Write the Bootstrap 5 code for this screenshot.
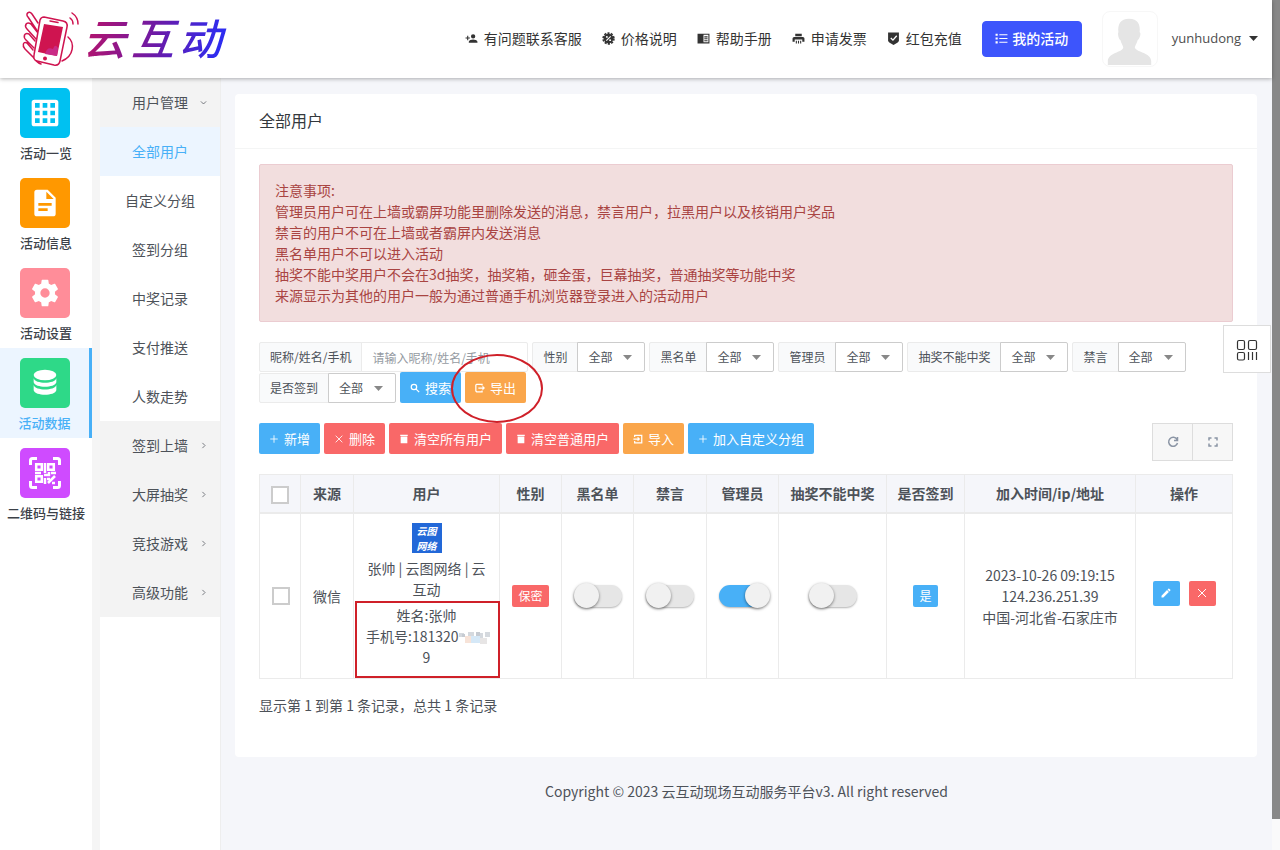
<!DOCTYPE html>
<html lang="zh-CN">
<head>
<meta charset="utf-8">
<meta name="viewport" content="width=device-width, initial-scale=1">
<title>全部用户 - 云互动</title>
<link rel="stylesheet" href="https://cdn.jsdelivr.net/npm/bootstrap@5.3.0/dist/css/bootstrap.min.css">
<style>
:root{--blue:#48b0f7;--red:#f96868;--orange:#faa64b;--ink:#4d5259;--line:#ebebeb}
body{font-family:"Noto Sans CJK SC","Noto Sans",sans-serif;font-size:14px;line-height:21px;color:var(--ink);background:#f5f6fa}
a{text-decoration:none;color:inherit}
.ico{width:1em;height:1em;fill:currentColor;flex:none}
.ln{fill:none;stroke:currentColor;stroke-width:2}
.scroll-track{width:8px;min-width:8px;background:#fafafa}
.scroll-thumb{height:819px;max-height:100%;background:#888}
.topbar{height:78px;background:#fff;box-shadow:0 1px 4px rgba(0,0,0,.3);z-index:5;padding:0 14px 0 21px;color:#333}
.topbar .ico{font-size:13px}
.brand-word{display:flex;gap:5px;font-size:43px;line-height:50px;font-weight:500;font-style:italic;background:linear-gradient(100deg,#b3146e 5%,#6a1aa8 50%,#2e2cf0 90%);-webkit-background-clip:text;background-clip:text;color:transparent;padding:0 10px 0 0;margin-bottom:6px}
.toplinks{gap:20px}
.toplinks>a{display:flex;align-items:center;gap:6px;padding-bottom:2px}
.btn-mine{--bs-btn-bg:#3d55fc;--bs-btn-border-color:#3d55fc;--bs-btn-color:#fff;height:36px;width:100px;font-size:14px;font-weight:500;padding:0 0 2px;border-radius:4px}
.face{width:56px;height:56px;border:1px solid #f7f7f7;border-radius:8px}
.user-btn{border:0;background:none;padding:0 0 2px;color:#4d4d4d;margin-left:14px;font-family:"Open Sans",sans-serif;font-size:13px}
.side-a{width:92px;background:#fff}
.side-a a{display:block;height:90px;padding:10px 0 0 20px;font-size:13px;font-weight:500;color:#3c4148}
.side-a a.on{background:#ecf5ff;border-right:3px solid var(--blue);color:var(--blue)}
.side-a .tile{width:50px;height:50px;border-radius:5px;color:#fff;font-size:32px}
.side-a .cap{width:92px;margin:5px 0 0 -20px;text-align:center;line-height:20px}
.side-a .on .cap{width:89px}
.side-b{width:129px;background:#fff;border-left:8px solid #f5f5f5;border-right:1px solid #eee}
.side-b a{display:flex;align-items:center;justify-content:center;height:49px;position:relative}
.side-b a.grp{background:#f3f3f3}
.side-b a.on{background:#ecf5ff;color:var(--blue)}
.side-b .ico{position:absolute;right:12px;font-size:9px}
.side-b .ln{stroke-width:3}
.panel{background:#fff;border-radius:4px;margin:16px 15px 0 14px;min-height:663px}
.panel-head{height:55px;padding:16px 24px 0;border-bottom:1px solid #f4f5f5;font-size:16px;color:#33383d}
.panel-main{padding:15px 24px}
.notice{background:#f2dede;border:1px solid #ebccd1;border-radius:2px;color:#a94442;padding:15px;margin-bottom:20px}
.filters{gap:1px 4px;font-size:12px}
.filters .input-group{width:auto;flex-wrap:nowrap}
.filters .input-group>*{height:30px;font-size:12px;line-height:18px;border-color:#ebebeb;color:var(--ink)}
.filters .input-group-text{background:#f9fafb;padding:0 10px;border-radius:2px}
.filters .form-control{width:167px;flex:none;padding:0 10px;border-radius:2px}
.filters .form-control::placeholder{color:#959ba2}
.filters .input-group>.form-select{width:68px;flex:none;padding:0 10px;border-color:#ccc;border-radius:2px;background-size:9px 5px;background-position:right 12px center;
--bs-form-select-bg-img:url("data:image/svg+xml,%3Csvg xmlns='http://www.w3.org/2000/svg' viewBox='0 0 9 5'%3E%3Cpath fill='%23888' d='M0 0h9L4.5 5z'/%3E%3C/svg%3E");background-image:var(--bs-form-select-bg-img)}
.filters>button,.filters>.position-relative{margin-top:-1px}
.act{display:inline-flex;align-items:center;gap:5px;height:31px;font-size:13px;line-height:20px;padding:0 10px;border:0;border-radius:2px;color:#fff;white-space:nowrap}
.act .ico{font-size:10px}
.act .ln{stroke-width:3}
.c-blue{background:var(--blue)}.c-red{background:var(--red)}.c-orange{background:var(--orange)}
.hint-ring{position:absolute;left:-14px;top:-18px;width:92px;height:69px;border:2px solid #cf2029;border-radius:50%;pointer-events:none;z-index:6}
.toolbar{margin-top:20px}
.tools button{width:41px;height:38px;border:1px solid #ddd;background:#f7f7f7;color:#8b95a5;padding:0;font-size:12px;display:flex;align-items:center;justify-content:center}
.tools .ln{stroke-width:3}
.tools button+button{margin-left:-1px}
.grid-users{table-layout:fixed;margin:13px 0 16px;color:var(--ink);border-color:var(--line);text-align:center;vertical-align:middle}
.grid-users th{background:#f5f6fa;padding:8px 2px;font-weight:700;color:var(--ink);border-bottom-width:2px}
.grid-users td{padding:10px 12px;color:var(--ink)}
.grid-users td.who{padding-top:9px}
.who-real{padding-top:5px}
.grid-users td.ops{padding-bottom:16px}
.ops-row{gap:9px}
.grid-users input.pick{appearance:none;width:18px;height:18px;border:2px solid #ccc;background:#fff;display:block;margin:0 auto}
.w1{width:41px}.w2{width:53px}.w3{width:146px}.w4{width:62px}.w5{width:72px}.w6{width:73px}.w7{width:72px}.w8{width:108px}.w9{width:78px}.w10{width:171px}.w11{width:97px}
.ava{width:30px;height:30px;background:#2268d8;color:#fff;font-size:10px;line-height:15px;font-weight:700;font-style:italic;margin:0 auto 5px}
.ava span{display:block;height:15px}
.mark-box{position:absolute;left:1px;right:-1px;bottom:0;height:77px;border:2px solid #cf2029;pointer-events:none}
.pill{display:inline-block;font-size:12px;line-height:22px;border-radius:2px;padding:0 6px;color:#fff}
.switcher{appearance:none;position:relative;width:48px;height:22px;border-radius:11px;background:#e6e6e6;box-shadow:0 1px 2px rgba(0,0,0,.3);display:block;margin:0 auto}
.switcher::before{content:"";position:absolute;left:0;top:-2px;width:25px;height:25px;border-radius:50%;background:#f1f1f1;box-shadow:0 1px 3px rgba(0,0,0,.5)}
.switcher:checked{background:var(--blue)}
.switcher:checked::before{left:26px}
.mini{width:27px;height:25px;border:0;border-radius:2px;color:#fff;padding:0;font-size:12px;display:inline-flex;align-items:center;justify-content:center}
.foot{padding:24px 0}
.float-box{position:absolute;right:1px;top:325px;width:48px;height:48px;background:#fff;border:1px solid #ddd;padding:0;color:#333;font-size:24px}
</style>
</head>
<body>
<svg class="d-none">
<symbol id="plus" viewBox="0 0 24 24"><path class="ln" d="M12 3v18M3 12h18"/></symbol>
<symbol id="cross" viewBox="0 0 24 24"><path class="ln" d="M4 4l16 16M20 4L4 20"/></symbol>
<symbol id="trash" viewBox="0 0 24 24"><path d="M3 2h18v3H3zM4 6h16v16H4z"/></symbol>
<symbol id="right" viewBox="0 0 24 24"><path class="ln" d="M9 5l7 7-7 7"/></symbol>
<symbol id="down" viewBox="0 0 24 24"><path class="ln" d="M5 9l7 7 7-7"/></symbol>
</svg>
<div class="d-flex min-vh-100">
<div class="flex-grow-1 d-flex flex-column position-relative">
<header class="topbar d-flex align-items-center position-relative">
  <a href="#" class="d-flex align-items-center" aria-label="云互动">
    <svg width="62" height="60" viewBox="0 0 62 60" fill="none" stroke="#cf1450" stroke-width="1.5" stroke-linecap="round" stroke-linejoin="round">
      <path d="M17 14L11 5C8 1 4 5 7 8L17 23M17 24L10 15C5 12 3 17 6 20L15 30M14 32L8 25C3 23 2 28 5 31L13 39M12 41L6 34C2 32 1 37 4 40L13 49C15 52 17 54 20 55M47 28C54 34 53 47 41 52"/>
      <path fill="#fff" d="M23 8L42 12Q47 13 46 18L39 52Q38 57 33 56L16 52Q12 51 13 46L19 11Q20 8 23 8Z"/>
      <path fill="#cf1450" stroke="none" d="M23 15L42 18L36 47L17 43Z"/><path fill="#c92a86" stroke="none" d="M24 45Q26 37 32 40Q34 34 37 39L36 47Z"/>
      <path d="M29 12l8 1.500M49 9Q52 11 52 15M51 4Q57 8 57 15"/><circle cx="24" cy="49.500" r="2" fill="#cf1450" stroke="none"/>
    </svg>
    <span class="brand-word"><span>云</span><span>互</span><span>动</span></span>
  </a>
  <nav class="toplinks d-flex align-items-center ms-auto">
    <a href="#"><svg class="ico" viewBox="0 0 24 24"><path d="M15 14c-2.700 0-8 1.300-8 4v2h16v-2c0-2.700-5.300-4-8-4M6 10V7H4v3H1v2h3v3h2v-3h3v-2M15 12a4 4 0 0 0 0-8 4 4 0 0 0 0 8"/></svg>有问题联系客服</a>
    <a href="#"><svg class="ico" viewBox="0 0 24 24"><circle cx="12" cy="12" r="9"/><circle cx="12" cy="12" r="10" fill="none" stroke="currentColor" stroke-width="3" stroke-dasharray="4 2.280"/><path d="M8 16l8-8" stroke="#fff" stroke-width="2"/><circle cx="9" cy="9" r="1.800" fill="#fff"/><circle cx="15" cy="15" r="1.800" fill="#fff"/></svg>价格说明</a>
    <a href="#"><svg class="ico" viewBox="0 0 24 24"><path fill-rule="evenodd" d="M1 3h22v18H1zM12 5v14h9V5zM13.500 8h6v2h-6zM13.500 11.500h6v2h-6zM13.500 15h6v2h-6z"/></svg>帮助手册</a>
    <a href="#"><svg class="ico" viewBox="0 0 24 24"><path d="M6 3h12v5H6zM4 9h16q3 0 3 3v6h-4v-4H5v4H1v-6q0-3 3-3M7 16h2v5H7zM11 16h2v5h-2zM15 16h2v5h-2z"/></svg>申请发票</a>
    <a href="#"><svg class="ico" viewBox="0 0 24 24"><path d="M2 1h20v14q0 3-3 5l-7 4-7-4q-3-2-3-5z"/><path d="M7 11l4 4 7-8" fill="none" stroke="#fff" stroke-width="2.500"/></svg>红包充值</a>
    <button class="btn btn-mine d-flex align-items-center justify-content-center gap-1"><svg class="ico" viewBox="0 0 24 24"><path d="M8 4h15v2H8zM8 11h15v2H8zM8 18h15v2H8zM1 3h4v4H1zM1 10h4v4H1zM1 17h4v4H1z"/></svg>我的活动</button>
    <div class="d-flex align-items-center">
      <svg class="face" viewBox="0 0 56 56"><path fill="#e5e5e5" d="M27 7c9 0 12 6 11 14 2 1 0 7-2 8-1 4-3 6-3 8 2 5 17 5 17 14v4H5v-4c0-9 15-9 16-14 0-2-2-4-3-8-2-1-3-7-2-8-1-8 2-14 11-14"/></svg>
      <button class="user-btn d-flex align-items-center gap-2">yunhudong <svg width="9" height="5" viewBox="0 0 9 5"><path fill="#333" d="M0 0h9L4.500 5z"/></svg></button>
    </div>
  </nav>
</header>
<div class="d-flex flex-grow-1">
  <nav class="side-a flex-shrink-0">
    <a href="#"><div class="tile d-flex align-items-center justify-content-center" style="background:#00c1f1"><svg class="ico" viewBox="0 0 24 24"><path fill-rule="evenodd" d="M4 2h16q2 0 2 2v16q0 2-2 2H4q-2 0-2-2V4q0-2 2-2M4.500 4.500v3.500H8V4.500zM10.250 4.500v3.500h3.500V4.500zM16 4.500v3.500h3.500V4.500zM4.500 10.250v3.500H8v-3.500zM10.250 10.250v3.500h3.500v-3.500zM16 10.250v3.500h3.500v-3.500zM4.500 16v3.500H8V16zM10.250 16v3.500h3.500V16zM16 16v3.500h3.500V16z"/></svg></div><div class="cap">活动一览</div></a>
    <a href="#"><div class="tile d-flex align-items-center justify-content-center" style="background:#ff9800"><svg class="ico" viewBox="0 0 24 24"><path fill-rule="evenodd" d="M6 2h8l6 6v12q0 2-2 2H6q-2 0-2-2V4q0-2 2-2M13 3.500V9h5.500zM7 12v2h10v-2zM7 16v2h7v-2z"/></svg></div><div class="cap">活动信息</div></a>
    <a href="#"><div class="tile d-flex align-items-center justify-content-center" style="background:#ff8d99"><svg class="ico" viewBox="0 0 24 24"><path d="M12,15.500A3.500,3.500 0 0,1 8.500,12A3.500,3.500 0 0,1 12,8.500A3.500,3.500 0 0,1 15.500,12A3.500,3.500 0 0,1 12,15.500M19.430,12.970C19.470,12.650 19.500,12.330 19.500,12C19.500,11.670 19.470,11.340 19.430,11L21.540,9.370C21.730,9.220 21.780,8.950 21.660,8.730L19.660,5.270C19.540,5.050 19.270,4.960 19.050,5.050L16.560,6.050C16.040,5.660 15.500,5.320 14.870,5.070L14.500,2.420C14.460,2.180 14.250,2 14,2H10C9.750,2 9.540,2.180 9.500,2.420L9.130,5.070C8.500,5.320 7.960,5.660 7.440,6.050L4.950,5.050C4.730,4.960 4.460,5.050 4.340,5.270L2.340,8.730C2.210,8.950 2.270,9.220 2.460,9.370L4.570,11C4.530,11.340 4.500,11.670 4.500,12C4.500,12.330 4.530,12.650 4.570,12.970L2.460,14.630C2.270,14.780 2.210,15.050 2.340,15.270L4.340,18.730C4.460,18.950 4.730,19.030 4.950,18.950L7.440,17.940C7.960,18.340 8.500,18.680 9.130,18.930L9.500,21.580C9.540,21.820 9.750,22 10,22H14C14.250,22 14.460,21.820 14.500,21.580L14.870,18.930C15.500,18.670 16.040,18.340 16.560,17.940L19.050,18.950C19.270,19.030 19.540,18.950 19.660,18.730L21.660,15.270C21.780,15.050 21.730,14.780 21.540,14.630L19.430,12.970Z"/></svg></div><div class="cap">活动设置</div></a>
    <a href="#" class="on"><div class="tile d-flex align-items-center justify-content-center" style="background:#2ed988"><svg class="ico" viewBox="0 0 24 24"><ellipse cx="12" cy="6" rx="8.500" ry="4"/><path d="M3.500 8.500c1 4.500 16 4.500 17 0v3c-1 4.500-16 4.500-17 0zM3.500 13.500c1 4.500 16 4.500 17 0v4c-1 4.500-16 4.500-17 0z"/></svg></div><div class="cap">活动数据</div></a>
    <a href="#"><div class="tile d-flex align-items-center justify-content-center" style="background:#cf4bff"><svg width="34" height="34" viewBox="0 0 34 34" fill="none" stroke="#fff" stroke-width="3"><path d="M2.500 9V4.500q0-2 2-2H9M25 2.500h4.500q2 0 2 2V9M31.500 25v4.500q0 2-2 2H25M9 31.500H4.500q-2 0-2-2V25"/><path stroke-width="2.500" d="M8.200 8.200h5.600v5.600H8.200zM20.200 8.200h5.600v5.600h-5.600zM8.200 20.200h5.600v5.600H8.200zM17 7v10M7 17h6M16 19h5v-3M23 17h5M17 22v6M20 27l7-7M19 23h3M24 27h3"/></svg></div><div class="cap">二维码与链接</div></a>
  </nav>
  <nav class="side-b flex-shrink-0">
    <a href="#" class="grp">用户管理<svg class="ico"><use href="#down"/></svg></a>
    <a href="#" class="on">全部用户</a>
    <a href="#">自定义分组</a>
    <a href="#">签到分组</a>
    <a href="#">中奖记录</a>
    <a href="#">支付推送</a>
    <a href="#">人数走势</a>
    <a href="#" class="grp">签到上墙<svg class="ico"><use href="#right"/></svg></a>
    <a href="#" class="grp">大屏抽奖<svg class="ico"><use href="#right"/></svg></a>
    <a href="#" class="grp">竞技游戏<svg class="ico"><use href="#right"/></svg></a>
    <a href="#" class="grp">高级功能<svg class="ico"><use href="#right"/></svg></a>
  </nav>
  <div class="flex-grow-1">
    <main class="panel">
      <div class="panel-head">全部用户</div>
      <div class="panel-main">
        <div class="notice">注意事项:<br>管理员用户可在上墙或霸屏功能里删除发送的消息，禁言用户，拉黑用户以及核销用户奖品<br>禁言的用户不可在上墙或者霸屏内发送消息<br>黑名单用户不可以进入活动<br>抽奖不能中奖用户不会在3d抽奖，抽奖箱，砸金蛋，巨幕抽奖，普通抽奖等功能中奖<br>来源显示为其他的用户一般为通过普通手机浏览器登录进入的活动用户</div>
        <form class="filters d-flex flex-wrap">
          <div class="input-group"><label class="input-group-text" for="q">昵称/姓名/手机</label><input id="q" class="form-control" placeholder="请输入昵称/姓名/手机"></div>
          <div class="input-group"><label class="input-group-text" for="f1">性别</label><select id="f1" class="form-select"><option>全部</option></select></div>
          <div class="input-group"><label class="input-group-text" for="f2">黑名单</label><select id="f2" class="form-select"><option>全部</option></select></div>
          <div class="input-group"><label class="input-group-text" for="f3">管理员</label><select id="f3" class="form-select"><option>全部</option></select></div>
          <div class="input-group"><label class="input-group-text" for="f4">抽奖不能中奖</label><select id="f4" class="form-select"><option>全部</option></select></div>
          <div class="input-group"><label class="input-group-text" for="f5">禁言</label><select id="f5" class="form-select"><option>全部</option></select></div>
          <div class="input-group"><label class="input-group-text" for="f6">是否签到</label><select id="f6" class="form-select"><option>全部</option></select></div>
          <button type="button" class="act c-blue"><svg class="ico" viewBox="0 0 24 24"><path class="ln" d="M14 14l8 8M16 9.500a6.500 6.500 0 1 1-13 0 6.500 6.500 0 0 1 13 0"/></svg>搜索</button>
          <div class="position-relative"><button type="button" class="act c-orange"><svg class="ico" viewBox="0 0 24 24"><path class="ln" d="M17 6V3H4L2 5v14l2 2h13v-3M8 12h14M18 8l4 4-4 4"/></svg>导出</button><span class="hint-ring"></span></div>
        </form>
        <div class="toolbar d-flex align-items-start gap-1">
          <button class="act c-blue"><svg class="ico"><use href="#plus"/></svg>新增</button>
          <button class="act c-red"><svg class="ico"><use href="#cross"/></svg>删除</button>
          <button class="act c-red"><svg class="ico"><use href="#trash"/></svg>清空所有用户</button>
          <button class="act c-red"><svg class="ico"><use href="#trash"/></svg>清空普通用户</button>
          <button class="act c-orange"><svg class="ico" viewBox="0 0 24 24"><path class="ln" d="M4 7V3h17v18H4v-4M1 12h14M11 8l4 4-4 4"/></svg>导入</button>
          <button class="act c-blue"><svg class="ico"><use href="#plus"/></svg>加入自定义分组</button>
          <div class="tools d-flex ms-auto">
            <button aria-label="刷新"><svg class="ico" viewBox="0 0 24 24"><path class="ln" d="M20 7a9 9 0 1 0 1 7M21 2v7h-7"/></svg></button>
            <button aria-label="全屏"><svg class="ico" viewBox="0 0 24 24"><path class="ln" d="M4 9V4h5M15 4h5v5M20 15v5h-5M9 20H4v-5"/></svg></button>
          </div>
        </div>
        <table class="table table-bordered grid-users">
          <thead><tr><th class="w1"><input type="checkbox" class="pick" aria-label="全选"></th><th class="w2">来源</th><th class="w3">用户</th><th class="w4">性别</th><th class="w5">黑名单</th><th class="w6">禁言</th><th class="w7">管理员</th><th class="w8">抽奖不能中奖</th><th class="w9">是否签到</th><th class="w10">加入时间/ip/地址</th><th class="w11">操作</th></tr></thead>
          <tbody><tr>
            <td><input type="checkbox" class="pick" aria-label="选择"></td>
            <td>微信</td>
            <td class="who position-relative"><div class="ava"><span>云图</span><span>网络</span></div><div>张帅 | 云图网络 | 云<br>互动</div><div class="who-real">姓名:张帅<br><span class="text-nowrap">手机号:181320<svg width="31" height="12" viewBox="0 0 31 12"><path fill="#d5d9de" d="M0 1h5v4H0zM9 0h6v4H9zM20 1h4v10h-4zM26 0h5v5h-5z"/><path fill="#c6cbd2" d="M3 2h3v3H3zM17 0h4v5h-4z"/><path fill="#f7e3d8" d="M6 4h6v7H6z"/><path fill="#d5e8f7" d="M12 4h9v7h-9z"/><path fill="#e7e5e5" d="M21 6h7v6h-7z"/></svg></span><br>9</div><span class="mark-box"></span></td>
            <td class="px-0"><span class="pill c-red">保密</span></td>
            <td><input type="checkbox" class="switcher" aria-label="黑名单"></td>
            <td><input type="checkbox" class="switcher" aria-label="禁言"></td>
            <td><input type="checkbox" class="switcher" aria-label="管理员" checked></td>
            <td><input type="checkbox" class="switcher" aria-label="抽奖不能中奖"></td>
            <td><span class="pill c-blue">是</span></td>
            <td>2023-10-26 09:19:15<br>124.236.251.39<br>中国-河北省-石家庄市</td>
            <td class="ops"><div class="ops-row d-flex justify-content-center"><button class="mini c-blue" aria-label="编辑"><svg class="ico" viewBox="0 0 24 24"><path d="M20.710,7.040C21.100,6.650 21.100,6 20.710,5.630L18.370,3.290C18,2.900 17.350,2.900 16.960,3.290L15.120,5.120L18.870,8.870M3,17.250V21H6.750L17.810,9.930L14.060,6.180L3,17.250Z"/></svg></button><button class="mini c-red" aria-label="删除"><svg class="ico"><use href="#cross"/></svg></button></div></td>
          </tr></tbody>
        </table>
        <div>显示第 1 到第 1 条记录，总共 1 条记录</div>
      </div>
    </main>
    <footer class="foot text-center">Copyright © 2023 云互动现场互动服务平台v3. All right reserved</footer>
  </div>
</div>
<button class="float-box" aria-label="组件"><svg class="ico" viewBox="0 0 24 24"><path fill="none" stroke="currentColor" stroke-width="1.200" d="M4 2.500h4q1.500 0 1.500 1.500v6q0 1.500-1.500 1.500H4Q2.500 11.500 2.500 10V4Q2.500 2.500 4 2.500M15 2.500h5q1.500 0 1.500 1.500v6q0 1.500-1.500 1.500h-5q-1.500 0-1.500-1.500V4q0-1.500 1.500-1.500M4 14.500h4q1.500 0 1.500 1.500v4.500q0 1.500-1.500 1.500H4q-1.500 0-1.500-1.500V16q0-1.500 1.500-1.500M13.500 14v8M17.500 14v8M21.500 14v8"/></svg></button>
</div>
<div class="scroll-track flex-shrink-0"><div class="scroll-thumb"></div></div>
</div>
<script src="https://cdn.jsdelivr.net/npm/bootstrap@5.3.0/dist/js/bootstrap.bundle.min.js"></script>
</body>
</html>
